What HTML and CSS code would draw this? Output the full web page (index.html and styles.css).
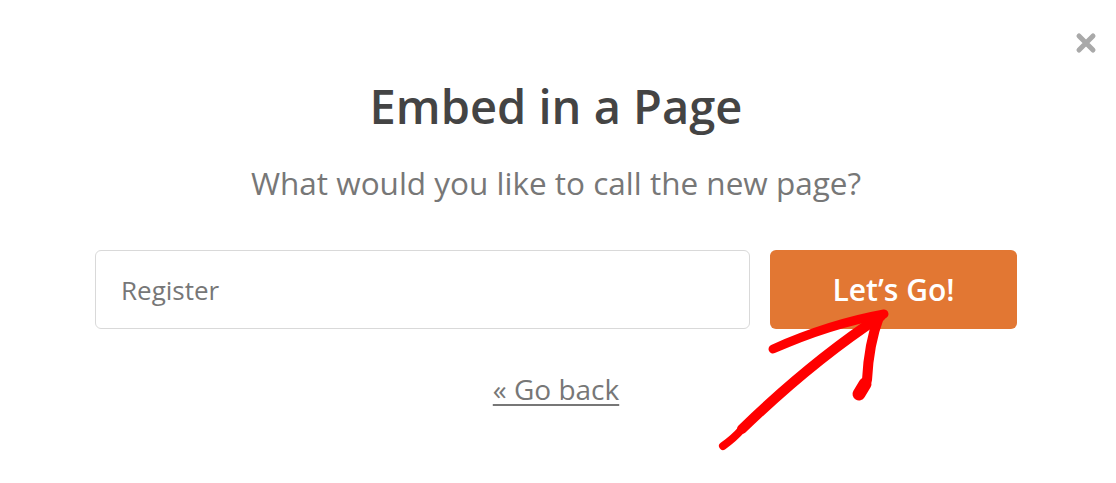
FILE: index.html
```html
<!DOCTYPE html>
<html lang="en">
<head>
<meta charset="UTF-8" />
<meta name="viewport" content="width=device-width, initial-scale=1.0"/>
<title>Embed in a Page</title>
<link rel="stylesheet" href="styles.css">
</head>
<body>

<div class="modal">
<button class="close" aria-label="close">
<svg width="22" height="22" viewBox="0 0 22 22"><path d="M4 4 L18 18 M18 4 L4 18" stroke="#a9a9a9" stroke-width="5" stroke-linecap="round"/></svg>
</button>

<h1 class="title">Embed in a Page</h1>
<p class="subtitle">What would you like to call the new page?</p>

<div class="form-row">
<input class="page-name" type="text" value="Register"/>
<button class="go-btn">Let’s Go!</button>
</div>

<a class="back-link" href="#">« Go back</a>

<svg class="arrow" width="1116" height="483" viewBox="0 0 1116 483">
<g fill="none" stroke="#f00" stroke-linecap="round" stroke-linejoin="round">
<path stroke-width="8" d="M723,446 C730,441 736,436 742,429"/>
<path stroke-width="10" d="M742,429 C772,400 820,356 881,316"/>
<path stroke-width="9" d="M773,349 C800,337 840,322 884,314"/>
<path stroke-width="10" d="M879,317 C871,338 868,360 867,380"/>
<path stroke-width="13" d="M865,384 L859,394"/>
</g>
</svg>
</div>

</body>
</html>
```

FILE: styles.css
```css
* {
box-sizing: border-box;
}

body {
margin: 0;
background: #ffffff;
font-family: 'Open Sans', 'Noto Sans', sans-serif;
}

.modal {
position: relative;
width: 1116px;
height: 483px;
display: flex;
flex-direction: column;
align-items: center;
padding: 76px 4px 0 0;
}

.close {
position: absolute;
top: 32px;
right: 19px;
background: none;
border: none;
padding: 0;
cursor: pointer;
}

.title {
margin: 0;
font-size: 47px;
font-weight: 600;
line-height: 60px;
color: #444444;
}

.subtitle {
margin: 27px 0 0;
font-size: 31.5px;
font-weight: 400;
line-height: 40px;
color: #777777;
}

.form-row {
display: flex;
gap: 20px;
width: 922px;
margin-top: 47px;
}

.page-name {
flex: 1;
height: 79px;
border: 1px solid #d9d9d9;
border-radius: 6px;
padding: 0 25px;
font-family: inherit;
font-size: 26px;
color: #777777;
outline: none;
}

.go-btn {
width: 247px;
height: 79px;
background: #e27733;
border: none;
border-radius: 6px;
color: #ffffff;
font-family: inherit;
font-size: 30px;
font-weight: 600;
cursor: pointer;
}

.back-link {
margin-top: 42px;
font-size: 28px;
line-height: 36px;
color: #777777;
text-decoration: underline;
text-underline-offset: 4px;
}

.arrow {
position: absolute;
left: 0;
top: 0;
pointer-events: none;
}
```
